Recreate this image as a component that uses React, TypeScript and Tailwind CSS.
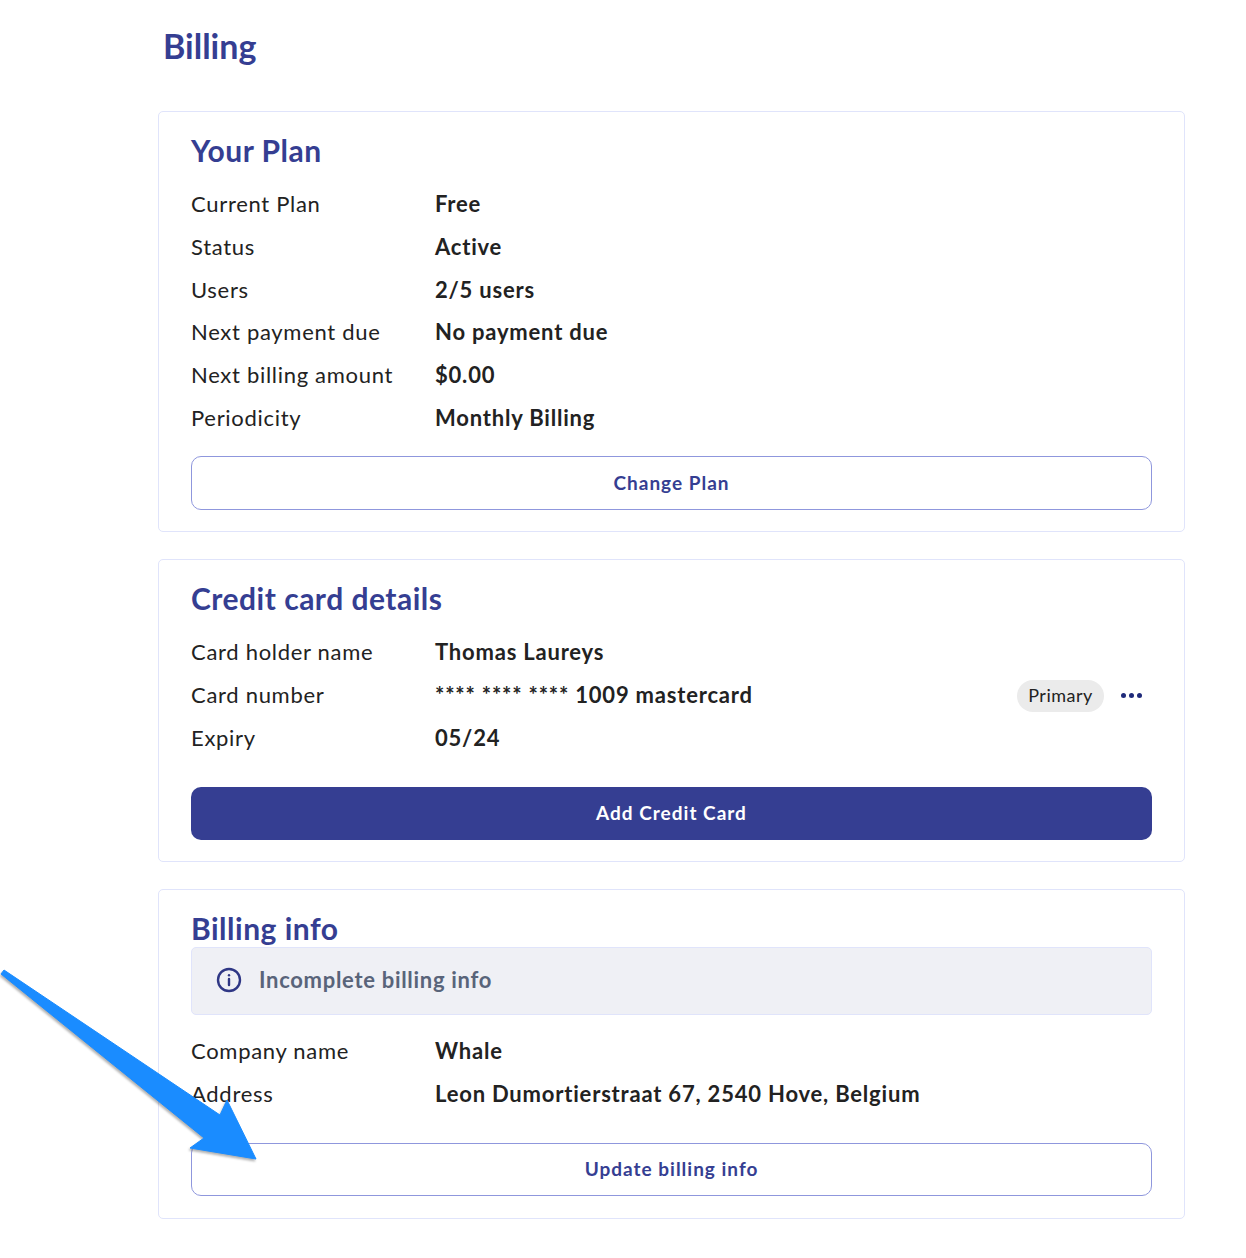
const font = "font-['Lato','Open_Sans',sans-serif]";

const Row = ({ label, value, right }: { label: string; value: string; right?: boolean }) => (
  <div className="flex items-center h-[42.7px]">
    <div className="w-[244px] shrink-0 text-[22px] text-[#222222] tracking-[0.7px]">{label}</div>
    <div className="text-[22px] font-bold text-[#222222] tracking-[0.8px]">{value}</div>
    {right && (
      <div className="ml-auto mt-[2px] flex items-center gap-[17px] pr-[10px]">
        <span className="h-8 w-[87px] rounded-full bg-[#ebebeb] text-[18px] text-[#222222] tracking-[0.5px] flex items-center justify-center">
          Primary
        </span>
        <span className="flex gap-[3px]">
          <i className="block w-[5px] h-[5px] rounded-full bg-[#1f2a7a]" />
          <i className="block w-[5px] h-[5px] rounded-full bg-[#1f2a7a]" />
          <i className="block w-[5px] h-[5px] rounded-full bg-[#1f2a7a]" />
        </span>
      </div>
    )}
  </div>
);

const Card = ({ className, children }: { className: string; children: React.ReactNode }) => (
  <section className={`border border-[#e0e4fb] rounded-[5px] px-[32px] ${className}`}>{children}</section>
);

const Title = ({ children }: { children: React.ReactNode }) => (
  <h2 className="text-[30px] leading-[36px] font-bold text-[#353e92] tracking-[0.5px]">{children}</h2>
);

const OutlineButton = ({ className, children }: { className: string; children: React.ReactNode }) => (
  <button className={`w-full rounded-[10px] border border-[#8f97dd] bg-white text-[19px] font-bold text-[#353e92] tracking-[1px] ${className}`}>
    {children}
  </button>
);

export default function App() {
  return (
    <div className={`${font} relative w-[1246px] h-[1258px] bg-white overflow-hidden pl-[158px] pt-[24px]`}>
      <h1 className="pl-[5px] h-[87px] text-[34px] leading-[44px] font-bold text-[#353e92]">Billing</h1>

      <div className="w-[1027px] flex flex-col gap-[27px]">
        <Card className="h-[421px] pt-[20px]">
          <Title>Your Plan</Title>
          <div className="mt-[14.5px]">
            <Row label="Current Plan" value="Free" />
            <Row label="Status" value="Active" />
            <Row label="Users" value="2/5 users" />
            <Row label="Next payment due" value="No payment due" />
            <Row label="Next billing amount" value="$0.00" />
            <Row label="Periodicity" value="Monthly Billing" />
          </div>
          <div className="mt-[17.5px]">
            <OutlineButton className="h-[54px]">Change Plan</OutlineButton>
          </div>
        </Card>

        <Card className="h-[303px] pt-[20px]">
          <Title>Credit card details</Title>
          <div className="mt-[14.5px]">
            <Row label="Card holder name" value="Thomas Laureys" />
            <Row label="Card number" value="**** **** **** 1009 mastercard" right />
            <Row label="Expiry" value="05/24" />
          </div>
          <button className="mt-[28.5px] w-full h-[53px] rounded-[10px] bg-[#353e92] text-[19px] font-bold text-white tracking-[1px]">
            Add Credit Card
          </button>
        </Card>

        <Card className="h-[330px] pt-[20px]">
          <Title>Billing info</Title>
          <div className="mt-[1px] h-[68px] rounded-[5px] border border-[#e0e4fb] bg-[#eff0f5] flex items-center pl-[24px] pb-[3px] gap-[17px]">
            <svg width="26" height="26" viewBox="0 0 26 26" fill="none" stroke="#2f3785" strokeWidth="2.4" strokeLinecap="round">
              <circle cx="13" cy="13" r="11" />
              <path d="M13 12v6" />
              <path d="M13 8.2v.1" />
            </svg>
            <span className="text-[22px] font-bold text-[#59647a] tracking-[0.7px]">Incomplete billing info</span>
          </div>
          <div className="mt-[14px]">
            <Row label="Company name" value="Whale" />
            <Row label="Address" value="Leon Dumortierstraat 67, 2540 Hove, Belgium" />
          </div>
          <div className="mt-[29px]">
            <OutlineButton className="h-[53px] pb-[2px]">Update billing info</OutlineButton>
          </div>
        </Card>
      </div>

      {/* annotation arrow over the page */}
      <svg className="absolute left-0 top-0 pointer-events-none drop-shadow-[-1px_2px_1px_rgba(0,0,0,0.3)]" width="1246" height="1258" viewBox="0 0 1246 1258" fill="none">
        <path d="M1 974 L4 970 L220 1115 L227 1100 L256 1159 L190 1148 L204 1138 Z" fill="#1a8cff" stroke="#1a8cff" strokeWidth="1" strokeLinejoin="round" />
      </svg>
    </div>
  );
}
